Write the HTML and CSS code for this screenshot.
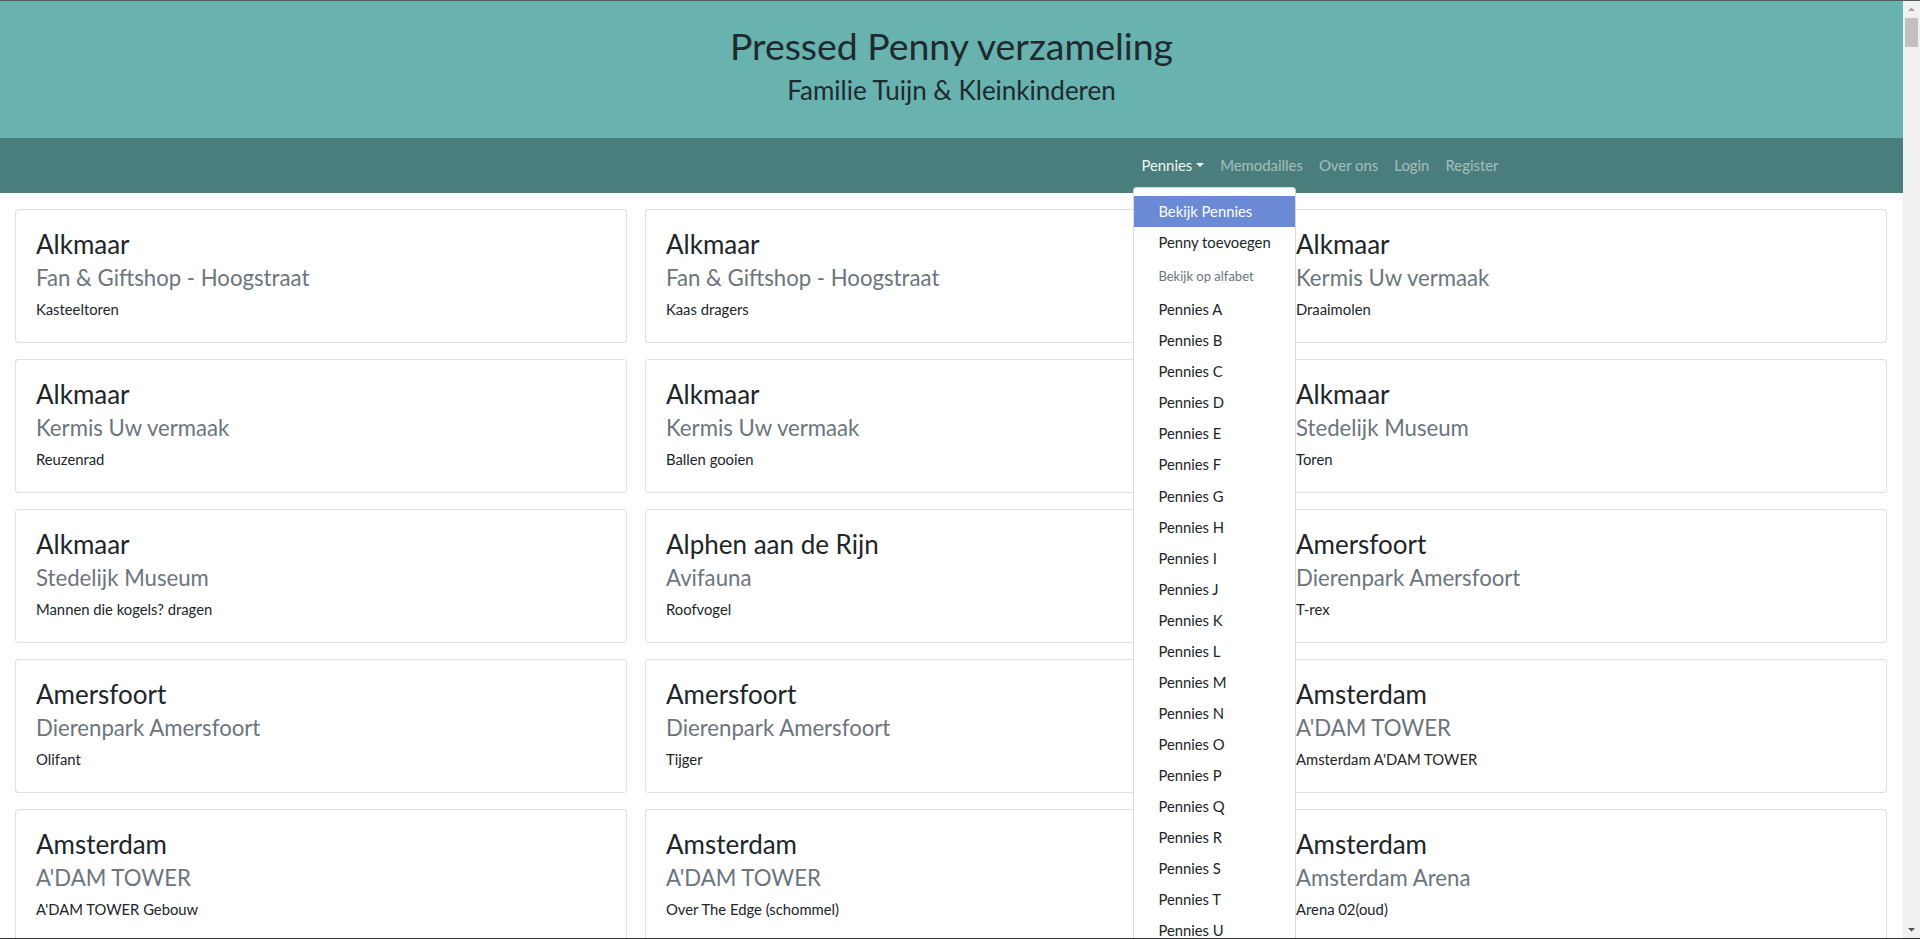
FILE: index.html
```html
<!DOCTYPE html>
<html lang="nl">
<head>
<meta charset="utf-8">
<title>Pressed Penny verzameling</title>
<link rel="stylesheet" href="styles.css">
</head>
<body>
<div class="frame">
  <div class="page">
    <header class="masthead">
      <h1 class="masthead-title">Pressed Penny verzameling</h1>
      <h3 class="masthead-sub">Familie Tuijn &amp; Kleinkinderen</h3>
    </header>
    <nav class="navbar">
      <div class="container">
        <ul class="nav">
          <li class="nav-item dropdown">
            <a class="nav-link active dropdown-toggle" href="#">Pennies</a>
            <div class="dropdown-menu">
              <a class="dropdown-item active" href="#">Bekijk Pennies</a>
              <a class="dropdown-item" href="#">Penny toevoegen</a>
              <div class="dropdown-header">Bekijk op alfabet</div>
              <a class="dropdown-item" href="#">Pennies A</a>
              <a class="dropdown-item" href="#">Pennies B</a>
              <a class="dropdown-item" href="#">Pennies C</a>
              <a class="dropdown-item" href="#">Pennies D</a>
              <a class="dropdown-item" href="#">Pennies E</a>
              <a class="dropdown-item" href="#">Pennies F</a>
              <a class="dropdown-item" href="#">Pennies G</a>
              <a class="dropdown-item" href="#">Pennies H</a>
              <a class="dropdown-item" href="#">Pennies I</a>
              <a class="dropdown-item" href="#">Pennies J</a>
              <a class="dropdown-item" href="#">Pennies K</a>
              <a class="dropdown-item" href="#">Pennies L</a>
              <a class="dropdown-item" href="#">Pennies M</a>
              <a class="dropdown-item" href="#">Pennies N</a>
              <a class="dropdown-item" href="#">Pennies O</a>
              <a class="dropdown-item" href="#">Pennies P</a>
              <a class="dropdown-item" href="#">Pennies Q</a>
              <a class="dropdown-item" href="#">Pennies R</a>
              <a class="dropdown-item" href="#">Pennies S</a>
              <a class="dropdown-item" href="#">Pennies T</a>
              <a class="dropdown-item" href="#">Pennies U</a>
              <a class="dropdown-item" href="#">Pennies V</a>
              <a class="dropdown-item" href="#">Pennies W</a>
            </div>
          </li>
          <li class="nav-item"><a class="nav-link" href="#">Memodailles</a></li>
          <li class="nav-item"><a class="nav-link" href="#">Over ons</a></li>
          <li class="nav-item"><a class="nav-link" href="#">Login</a></li>
          <li class="nav-item"><a class="nav-link" href="#">Register</a></li>
        </ul>
      </div>
    </nav>
    <main class="cards">
      <div class="card"><h3 class="card-title">Alkmaar</h3><h4 class="card-subtitle">Fan &amp; Giftshop - Hoogstraat</h4><p class="card-text">Kasteeltoren</p></div>
      <div class="card"><h3 class="card-title">Alkmaar</h3><h4 class="card-subtitle">Fan &amp; Giftshop - Hoogstraat</h4><p class="card-text">Kaas dragers</p></div>
      <div class="card"><h3 class="card-title">Alkmaar</h3><h4 class="card-subtitle">Kermis Uw vermaak</h4><p class="card-text">Draaimolen</p></div>
      <div class="card"><h3 class="card-title">Alkmaar</h3><h4 class="card-subtitle">Kermis Uw vermaak</h4><p class="card-text">Reuzenrad</p></div>
      <div class="card"><h3 class="card-title">Alkmaar</h3><h4 class="card-subtitle">Kermis Uw vermaak</h4><p class="card-text">Ballen gooien</p></div>
      <div class="card"><h3 class="card-title">Alkmaar</h3><h4 class="card-subtitle">Stedelijk Museum</h4><p class="card-text">Toren</p></div>
      <div class="card"><h3 class="card-title">Alkmaar</h3><h4 class="card-subtitle">Stedelijk Museum</h4><p class="card-text">Mannen die kogels? dragen</p></div>
      <div class="card"><h3 class="card-title">Alphen aan de Rijn</h3><h4 class="card-subtitle">Avifauna</h4><p class="card-text">Roofvogel</p></div>
      <div class="card"><h3 class="card-title">Amersfoort</h3><h4 class="card-subtitle">Dierenpark Amersfoort</h4><p class="card-text">T-rex</p></div>
      <div class="card"><h3 class="card-title">Amersfoort</h3><h4 class="card-subtitle">Dierenpark Amersfoort</h4><p class="card-text">Olifant</p></div>
      <div class="card"><h3 class="card-title">Amersfoort</h3><h4 class="card-subtitle">Dierenpark Amersfoort</h4><p class="card-text">Tijger</p></div>
      <div class="card"><h3 class="card-title">Amsterdam</h3><h4 class="card-subtitle">A'DAM TOWER</h4><p class="card-text">Amsterdam A'DAM TOWER</p></div>
      <div class="card"><h3 class="card-title">Amsterdam</h3><h4 class="card-subtitle">A'DAM TOWER</h4><p class="card-text">A'DAM TOWER Gebouw</p></div>
      <div class="card"><h3 class="card-title">Amsterdam</h3><h4 class="card-subtitle">A'DAM TOWER</h4><p class="card-text">Over The Edge (schommel)</p></div>
      <div class="card"><h3 class="card-title">Amsterdam</h3><h4 class="card-subtitle">Amsterdam Arena</h4><p class="card-text">Arena 02(oud)</p></div>
    </main>
  </div>
  <div class="scrollbar">
    <div class="sb-button">
      <svg width="17" height="17" viewBox="0 0 17 17"><polygon points="5,10 12,10 8.5,6.5" fill="#a3a3a3"/></svg>
    </div>
    <div class="sb-thumb"></div>
    <div class="sb-track"></div>
    <div class="sb-button">
      <svg width="17" height="17" viewBox="0 0 17 17"><polygon points="5,7 12,7 8.5,10.5" fill="#505050"/></svg>
    </div>
  </div>
</div>
</body>
</html>
```
FILE: styles.css
```css
* { box-sizing: border-box; }

html, body {
  margin: 0;
  padding: 0;
  height: 939px;
  overflow: hidden;
}

body {
  font-family: Lato, "Noto Sans", sans-serif;
  font-size: 14.8px;
  line-height: 23.04px;
  color: #212529;
  background: #fff;
}

.frame {
  display: flex;
  height: 939px;
  border-top: 1px solid #4f5d5e;
  border-bottom: 1px solid #2b2b2b;
  overflow: hidden;
}

.page {
  flex: 1;
  min-width: 0;
  overflow: hidden;
  position: relative;
}

/* header */
.masthead {
  background: #68b2b0;
  text-align: center;
  padding: 22.5px 0 25px;
}

.masthead-title {
  margin: 0 0 8px;
  font-size: 37.4px;
  line-height: 43.2px;
  font-weight: 400;
  color: #1f2a2d;
}

.masthead-sub {
  margin: 0 0 8px;
  font-size: 26px;
  line-height: 30.24px;
  font-weight: 400;
  color: #1f2a2d;
}

/* navbar */
.navbar {
  background: #4a7e7c;
  padding: 8px 0;
}

.container {
  width: 1140px;
  margin: 0 auto;
  padding: 0 15px;
}

.nav {
  list-style: none;
  margin: 0;
  padding: 0;
  display: flex;
  justify-content: flex-end;
}

.nav-item {
  position: relative;
}

.nav-link {
  display: block;
  padding: 8px;
  font-size: 14.9px;
  color: rgba(255, 255, 255, 0.5);
  text-decoration: none;
  white-space: nowrap;
}

.nav-link.active {
  color: rgba(255, 255, 255, 0.95);
}

.dropdown-toggle::after {
  content: "";
  display: inline-block;
  margin-left: 0.255em;
  vertical-align: 0.255em;
  border-top: 0.3em solid;
  border-right: 0.3em solid transparent;
  border-left: 0.3em solid transparent;
}

.dropdown-menu {
  position: absolute;
  top: 100%;
  left: 0;
  z-index: 10;
  margin-top: 2px;
  min-width: 160px;
  padding: 8px 0;
  background: #fff;
  border: 1px solid rgba(0, 0, 0, 0.15);
  border-radius: 4px;
}

.dropdown-item {
  display: block;
  padding: 4px 24px;
  color: #212529;
  text-decoration: none;
  white-space: nowrap;
}

.dropdown-item.active {
  background: #6a8ad6;
  color: #fff;
}

.dropdown-header {
  padding: 7.5px 24px 8.5px;
  font-size: 13px;
  line-height: 20.16px;
  color: #6c757d;
  white-space: nowrap;
}

/* cards */
.cards {
  display: grid;
  grid-template-columns: repeat(3, 1fr);
  column-gap: 18px;
  row-gap: 16px;
  padding: 16px 16px 0 15px;
}

.card {
  border: 1px solid rgba(0, 0, 0, 0.125);
  border-radius: 4px;
  padding: 19.5px 20px 20.5px;
  background: #fff;
}

.card-title {
  margin: 0 0 12px;
  font-size: 26px;
  line-height: 30.24px;
  font-weight: 400;
}

.card-subtitle {
  margin: -6.5px 0 7.3px;
  font-size: 22.2px;
  line-height: 25.92px;
  font-weight: 400;
  color: #6c757d;
}

.card-text {
  margin: 0;
}

/* scrollbar */
.scrollbar {
  width: 17px;
  flex: none;
  background: #f1f1f1;
  display: flex;
  flex-direction: column;
}

.sb-button {
  height: 17px;
  flex: none;
}

.sb-button svg {
  display: block;
}

.sb-thumb {
  height: 29px;
  margin: 0 2px;
  background: #c1c1c1;
  flex: none;
}

.sb-track {
  flex: 1;
}
```
